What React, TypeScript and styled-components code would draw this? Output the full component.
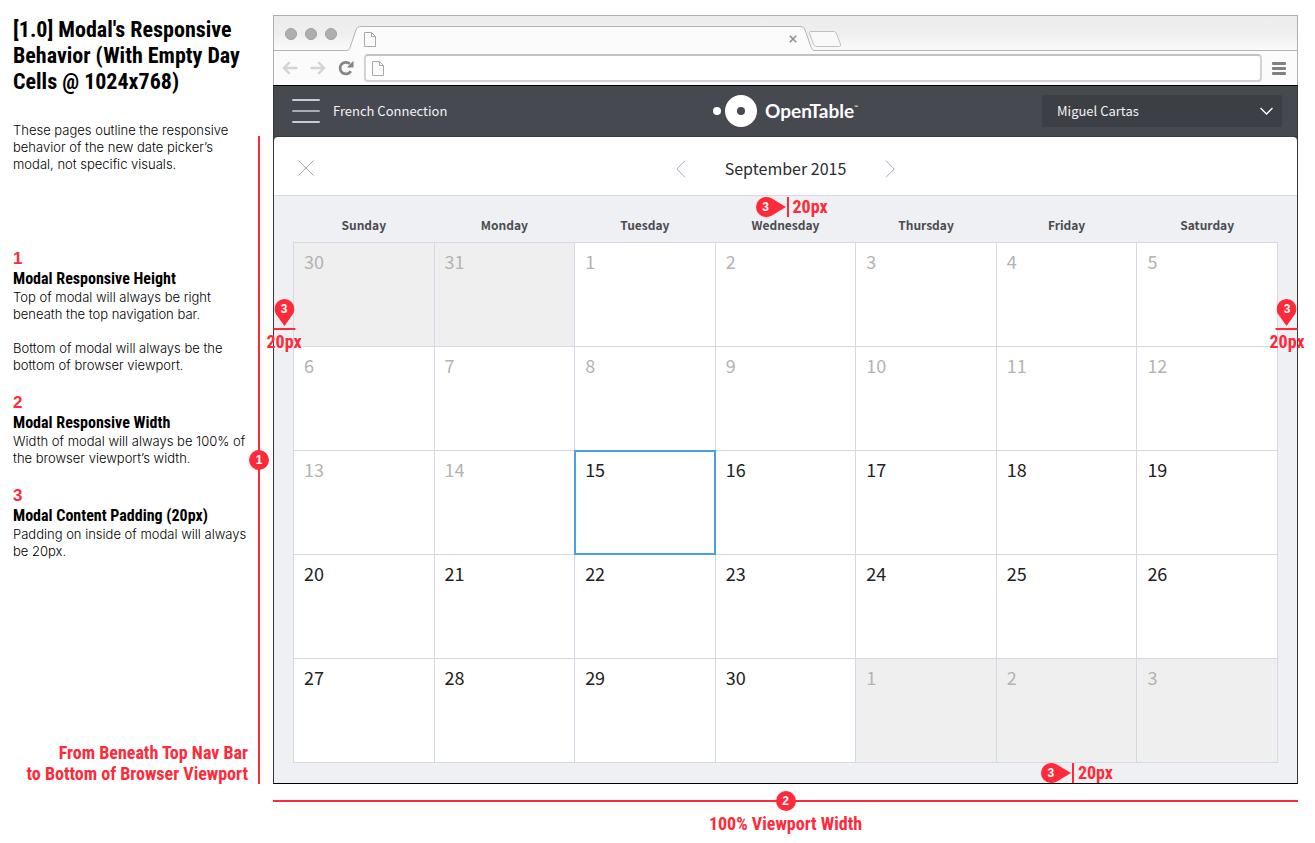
import React from "react";
import styled, { createGlobalStyle, css } from "styled-components";

const RED = "#ff2a39";
const LINE = "#d6d8e6";
const UI = `"Noto Sans CJK JP", "Noto Sans", sans-serif`;
const NARROW = `"Roboto Condensed", "Open Sans Condensed", "Liberation Sans", sans-serif`;

const Global = createGlobalStyle`
  *, *::before, *::after { box-sizing: border-box; }
  body { margin: 0; background: #fff; color: #000; font-family: "Liberation Sans", sans-serif; }
  h1, h2, h3, p { margin: 0; }
  button { margin: 0; padding: 0; border: 0; background: none; font: inherit; color: inherit; cursor: pointer; }
  svg { display: block; }
`;

const Page = styled.div`
  display: grid;
  grid-template-columns: 260px minmax(0, 1fr);
  column-gap: 13px;
  padding: 15px 17px 10px 0;
`;

/* ---- notes ---- */

const Aside = styled.aside`
  display: grid;
  grid-template-columns: minmax(0, 1fr) 2px;
`;

const Notes = styled.div`
  display: flex;
  flex-direction: column;
  padding: 2px 10px 0 13px;
  white-space: nowrap;
`;

const Title = styled.h1`
  font: bold 22px/26px ${NARROW};
`;

const Copy = styled.p`
  font-family: Inter, "Liberation Sans", sans-serif;
  font-weight: 300;
  font-size: 13px;
  line-height: 17px;
`;

const Intro = styled(Copy)`
  margin-top: 27px;
`;

const Sections = styled.div`
  display: grid;
  gap: 19px;
  margin-top: 76px;
`;

const SectionNumber = styled.div`
  color: ${RED};
  font-weight: bold;
  font-size: 17px;
  line-height: 20px;
`;

const SectionTitle = styled.h2`
  font: bold 16px/20px ${NARROW};
`;

const Label = styled.div`
  color: ${RED};
  font: bold 18px/21px ${NARROW};
`;

const HeightLabel = styled(Label)`
  margin-top: auto;
  text-align: right;
`;

const HeightRail = styled.div`
  position: relative;
  margin-top: 121px;
  background: ${RED};
`;

const Badge = styled.span`
  position: absolute;
  top: 50%;
  left: 50%;
  transform: translate(-50%, -50%);
  width: 20px;
  height: 20px;
  border-radius: 50%;
  background: ${RED};
  color: #fff;
  font-weight: bold;
  font-size: 12px;
  line-height: 20px;
  text-align: center;
`;

const WidthMeasure = styled.div`
  grid-column: 2;
  margin-top: 16px;
  text-align: center;
`;

const WidthRail = styled.div`
  position: relative;
  height: 2px;
  margin-bottom: 11px;
  background: ${RED};
`;

/* ---- browser ---- */

const Chrome = styled.div`
  border: 1px solid #b0b0b0;
  border-bottom: 0;
`;

const TabStrip = styled.div`
  display: flex;
  align-items: flex-end;
  height: 35px;
  padding-left: 11px;
  background: linear-gradient(#ececec 0%, #efefef 50%, #fbfbfb 100%);
  box-shadow: inset 0 -1px #b3b3b3;
`;

const Lights = styled.div`
  display: flex;
  gap: 8px;
  align-self: center;
  margin-right: 9px;
`;

const Light = styled.span`
  width: 12px;
  height: 12px;
  border: 1px solid #a0a0a2;
  border-radius: 50%;
  background: #aeaeb0;
`;

const TabBody = styled.div`
  display: flex;
  align-items: center;
  justify-content: space-between;
  flex: 0 1 439px;
  height: 25px;
  padding: 0 3px;
  border-top: 1px solid #b3b3b3;
  background: #fbfbfb;
`;

const Toolbar = styled.div`
  display: flex;
  align-items: center;
  height: 34px;
  padding: 0 11px 0 8px;
  background: #fbfbfb;
`;

const Tools = styled.div`
  display: flex;
  gap: 12px;
  margin-right: 10px;
`;

const Address = styled.label`
  display: flex;
  align-items: center;
  flex: 1;
  height: 28px;
  margin-right: 10px;
  padding-left: 6px;
  border: 2px solid #d2d2d2;
  border-top-color: #c2c2c2;
  border-radius: 4px;
  background: #fff;
`;

const AddressInput = styled.input`
  flex: 1;
  min-width: 0;
  margin-left: 8px;
  border: 0;
  outline: 0;
  background: none;
  font: 14px ${UI};
`;

const Viewport = styled.div`
  border: 1px solid #000;
  border-left-color: #35373b;
  border-right-color: #35373b;
  background: #464950;
  font-family: ${UI};
`;

const NavBar = styled.header`
  display: grid;
  grid-template-columns: 1fr auto 1fr;
  align-items: center;
  height: 51px;
  padding: 0 15px;
  border-bottom: 1px solid #3a3a42;
  color: #f3f3f3;
  font-size: 13px;
  line-height: 20px;
`;

const Place = styled.div`
  display: flex;
  align-items: center;
  gap: 13px;
  padding-left: 3px;
`;

const Brand = styled.div`
  display: flex;
  align-items: center;
  gap: 8px;
  color: #fff;
`;

const BrandName = styled.span`
  display: flex;
  font: 700 19px/22px Lato, sans-serif;
`;

const Trademark = styled.span`
  font-size: 5px;
  line-height: 14px;
`;

const Account = styled.div`
  position: relative;
  justify-self: end;
  width: 240px;
`;

const AccountSelect = styled.select`
  appearance: none;
  display: block;
  width: 100%;
  height: 32px;
  padding: 0 32px 0 15px;
  border: 0;
  border-radius: 0;
  background: #3c3f43;
  color: #f3f3f3;
  font: 13px/20px ${UI};
`;

const Caret = styled.svg`
  position: absolute;
  top: 12px;
  right: 9px;
  pointer-events: none;
`;

const ModalHead = styled.div`
  display: grid;
  grid-template-columns: 1fr auto 1fr;
  align-items: center;
  height: 59px;
  padding: 5px 24px 0;
  border-bottom: 1px solid ${LINE};
  border-radius: 4px 4px 0 0;
  background: #fff;
`;

const MonthNav = styled.div`
  display: flex;
  align-items: center;
  gap: 39px;
`;

const Month = styled.h2`
  padding-bottom: 2px;
  color: #2b2c2f;
  font-weight: 400;
  font-size: 16px;
  line-height: 24px;
`;

const ModalBody = styled.div`
  position: relative;
  padding: 20px 19px;
  background: #eff0f4;
`;

const Calendar = styled.table`
  width: 100%;
  table-layout: fixed;
  border-collapse: collapse;
`;

const Weekday = styled.th`
  height: 26px;
  padding: 0 0 8px;
  color: #4b4c50;
  font-weight: 700;
  font-size: 12px;
  line-height: 18px;
`;

type Kind = "outside" | "past" | "today" | "open";

const Cell = styled.td<{ $kind: Kind }>`
  padding: 0;
  border: 1px solid ${LINE};
  background: ${(p) => (p.$kind === "outside" ? "#efefef" : "#fff")};
`;

const Day = styled.button<{ $kind: Kind }>`
  display: block;
  width: 100%;
  height: 103px;
  padding: 6px 10px 73px;
  color: ${(p) => (p.$kind === "outside" || p.$kind === "past" ? "#b3b3b3" : "#222")};
  font-size: 18px;
  line-height: 24px;
  text-align: left;
  ${(p) =>
    p.$kind === "today" &&
    css`
      position: relative;
      outline: 2px solid #4a9fe4;
      outline-offset: -1px;
    `}
`;

/* ---- padding callouts ---- */

const Callout = styled.div<{ $vertical?: boolean }>`
  position: absolute;
  z-index: 2;
  display: flex;
  flex-direction: ${(p) => (p.$vertical ? "column" : "row")};
  align-items: center;
`;

const TopCallout = styled(Callout)`
  top: 0;
  left: calc(50% - 30px);
`;

const BottomCallout = styled(Callout)`
  bottom: 0;
  right: 184px;
`;

const LeftCallout = styled(Callout)`
  top: 103px;
  left: 10px;
  transform: translateX(-50%);
`;

const RightCallout = styled(Callout)`
  top: 103px;
  right: 10px;
  transform: translateX(50%);
`;

const Tick = styled.span<{ $vertical?: boolean }>`
  width: ${(p) => (p.$vertical ? 22 : 2)}px;
  height: ${(p) => (p.$vertical ? 2 : 20)}px;
  margin: ${(p) => (p.$vertical ? "2px 0 1px" : "0 4px 0 1px")};
  background: ${RED};
`;

const PinBox = styled.span`
  position: relative;
  display: block;
`;

const PinNumber = styled.span`
  position: absolute;
  top: 0;
  left: 0;
  width: 20px;
  color: #fff;
  font: bold 12px/20px "Liberation Sans", sans-serif;
  text-align: center;
`;

function Pin({ vertical }: { vertical?: boolean }) {
  return (
    <PinBox>
      {vertical ? (
        <svg width="20" height="27" viewBox="0 0 20 27">
          <path d="M10 0a10 10 0 0 1 10 10c0 4-3 7-5 10l-5 7-5-7c-2-3-5-6-5-10A10 10 0 0 1 10 0z" fill={RED} />
        </svg>
      ) : (
        <svg width="30" height="20" viewBox="0 0 30 20">
          <path d="M0 10A10 10 0 0 1 10 0c4 0 7 2 10 4l10 6-10 6c-3 2-6 4-10 4A10 10 0 0 1 0 10z" fill={RED} />
        </svg>
      )}
      <PinNumber>3</PinNumber>
    </PinBox>
  );
}

function CalloutContent({ vertical }: { vertical?: boolean }) {
  return (
    <>
      <Pin vertical={vertical} />
      <Tick $vertical={vertical} />
      <Label>20px</Label>
    </>
  );
}

function PageIcon() {
  return (
    <svg width="12" height="15" viewBox="0 0 12 15" fill="#fbfbfb" stroke="#a9a9a9">
      <path d="M.5.5h7l4 4v10H.5z" />
      <path d="M7.5.5v4h4" fill="none" />
    </svg>
  );
}

function Arrow({ back }: { back?: boolean }) {
  return (
    <svg width="16" height="14" viewBox="0 0 16 14" fill="none" stroke="#d4d4d4" strokeWidth="2.4" strokeLinecap="round" strokeLinejoin="round">
      <path d={back ? "M14.5 7H2M7 1.8 1.8 7 7 12.2" : "M1.5 7H14M9 1.8 14.2 7 9 12.2"} />
    </svg>
  );
}

const weekdays = ["Sunday", "Monday", "Tuesday", "Wednesday", "Thursday", "Friday", "Saturday"];

const days = Array.from({ length: 35 }, (_, i) => {
  const n = i - 1;
  const outside = n < 1 || n > 30;
  const kind: Kind = outside ? "outside" : n < 15 ? "past" : n === 15 ? "today" : "open";
  return { date: n < 1 ? n + 31 : n > 30 ? n - 30 : n, kind };
});

const weeks = [0, 1, 2, 3, 4].map((w) => days.slice(w * 7, w * 7 + 7));

export default function App() {
  return (
    <>
      <Global />
      <Page>
        <Aside>
          <Notes>
            <Title>
              [1.0] Modal's Responsive
              <br />
              Behavior (With Empty Day
              <br />
              Cells @ 1024x768)
            </Title>
            <Intro>
              These pages outline the responsive
              <br />
              behavior of the new date picker’s
              <br />
              modal, not specific visuals.
            </Intro>
            <Sections>
              <section>
                <SectionNumber>1</SectionNumber>
                <SectionTitle>Modal Responsive Height</SectionTitle>
                <Copy>
                  Top of modal will always be right
                  <br />
                  beneath the top navigation bar.
                  <br />
                  <br />
                  Bottom of modal will always be the
                  <br />
                  bottom of browser viewport.
                </Copy>
              </section>
              <section>
                <SectionNumber>2</SectionNumber>
                <SectionTitle>Modal Responsive Width</SectionTitle>
                <Copy>
                  Width of modal will always be 100% of
                  <br />
                  the browser viewport’s width.
                </Copy>
              </section>
              <section>
                <SectionNumber>3</SectionNumber>
                <SectionTitle>Modal Content Padding (20px)</SectionTitle>
                <Copy>
                  Padding on inside of modal will always
                  <br />
                  be 20px.
                </Copy>
              </section>
            </Sections>
            <HeightLabel>
              From Beneath Top Nav Bar
              <br />
              to Bottom of Browser Viewport
            </HeightLabel>
          </Notes>
          <HeightRail>
            <Badge>1</Badge>
          </HeightRail>
        </Aside>

        <main>
          <Chrome>
            <TabStrip>
              <Lights>
                <Light />
                <Light />
                <Light />
              </Lights>
              <svg width="15" height="25" viewBox="0 0 15 25">
                <path d="M0 24.5C3 24.5 3.5 23 4.2 21L10 4C11 1.5 12 .5 15 .5V25H0z" fill="#fbfbfb" />
                <path d="M0 24.5C3 24.5 3.5 23 4.2 21L10 4C11 1.5 12 .5 15 .5" fill="none" stroke="#b3b3b3" />
              </svg>
              <TabBody>
                <PageIcon />
                <button aria-label="Close tab">
                  <svg width="8" height="8" viewBox="0 0 8 8" stroke="#8f8f8f" strokeWidth="1.6">
                    <path d="M.8.8l6.400 6.400M7.200.8.8 7.200" />
                  </svg>
                </button>
              </TabBody>
              <svg width="44" height="25" viewBox="0 0 44 25">
                <path d="M0 .5C3 .5 4 1.5 5 4l6 17c.8 2 1.5 3.5 4 3.5V25H0z" fill="#fbfbfb" />
                <path d="M0 .5C3 .5 4 1.5 5 4l6 17c.8 2 1.5 3.5 4 3.5" fill="none" stroke="#b3b3b3" />
                <path d="M11 5.5H33c2 0 3 .8 3.6 2.5l3.8 10c.6 1.6 0 2.5-1.800 2.5H17c-2 0-2.800-.8-3.500-2.500L9.800 8C9.200 6.300 9.500 5.500 11 5.500z" fill="#f9f9f9" stroke="#c0c0c0" />
              </svg>
            </TabStrip>
            <Toolbar>
              <Tools>
                <button aria-label="Back">
                  <Arrow back />
                </button>
                <button aria-label="Forward">
                  <Arrow />
                </button>
                <button aria-label="Reload">
                  <svg width="16" height="16" viewBox="0 0 16 16">
                    <path d="M12.8 11.2A5.800 5.800 0 1 1 11.800 3.800" fill="none" stroke="#858585" strokeWidth="2.8" />
                    <path d="M15.500.8V7.500H8.800z" fill="#858585" />
                  </svg>
                </button>
              </Tools>
              <Address>
                <PageIcon />
                <AddressInput type="text" aria-label="Address" />
              </Address>
              <button aria-label="Browser menu">
                <svg width="14" height="13" viewBox="0 0 14 13" fill="#808080">
                  <rect width="14" height="3" rx="1" />
                  <rect y="5" width="14" height="3" rx="1" />
                  <rect y="10" width="14" height="3" rx="1" />
                </svg>
              </button>
            </Toolbar>
          </Chrome>

          <Viewport>
            <NavBar>
              <Place>
                <button aria-label="Menu">
                  <svg width="28" height="24" viewBox="0 0 28 24" fill="#c9cccf">
                    <rect width="28" height="2" rx="1" />
                    <rect y="11" width="28" height="2" rx="1" fill="#a9abae" />
                    <rect y="22" width="28" height="2" rx="1" />
                  </svg>
                </button>
                French Connection
              </Place>
              <Brand>
                <svg width="44" height="32" viewBox="0 0 44 32" fill="#fff">
                  <circle cx="4" cy="16" r="4" />
                  <path fillRule="evenodd" d="M28 0a16 16 0 1 1 0 32 16 16 0 0 1 0-32zm0 12a4 4 0 1 0 0 8 4 4 0 0 0 0-8z" />
                </svg>
                <BrandName>
                  OpenTable<Trademark>™</Trademark>
                </BrandName>
              </Brand>
              <Account>
                <AccountSelect aria-label="Account" defaultValue="Miguel Cartas">
                  <option>Miguel Cartas</option>
                </AccountSelect>
                <Caret width="13" height="8" viewBox="0 0 13 8" fill="none" stroke="#fff" strokeWidth="1.3">
                  <path d="M.5 1l6 6 6-6" />
                </Caret>
              </Account>
            </NavBar>

            <ModalHead>
              <div>
                <button aria-label="Close">
                  <svg width="16" height="16" viewBox="0 0 16 16" stroke="#a3a3a8">
                    <path d="M.5.5l15 15M15.5.5l-15 15" />
                  </svg>
                </button>
              </div>
              <MonthNav>
                <button aria-label="Previous month">
                  <svg width="10" height="18" viewBox="0 0 10 18" fill="none" stroke="#a9aabb">
                    <path d="M9 .7.8 9 9 17.300" />
                  </svg>
                </button>
                <Month>September 2015</Month>
                <button aria-label="Next month">
                  <svg width="10" height="18" viewBox="0 0 10 18" fill="none" stroke="#a9aabb">
                    <path d="M1 .7 9.200 9 1 17.300" />
                  </svg>
                </button>
              </MonthNav>
            </ModalHead>

            <ModalBody>
              <Calendar>
                <thead>
                  <tr>
                    {weekdays.map((d) => (
                      <Weekday key={d} scope="col">
                        {d}
                      </Weekday>
                    ))}
                  </tr>
                </thead>
                <tbody>
                  {weeks.map((week, w) => (
                    <tr key={w}>
                      {week.map(({ date, kind }) => (
                        <Cell key={date} $kind={kind}>
                          <Day $kind={kind}>{date}</Day>
                        </Cell>
                      ))}
                    </tr>
                  ))}
                </tbody>
              </Calendar>
              <TopCallout>
                <CalloutContent />
              </TopCallout>
              <BottomCallout>
                <CalloutContent />
              </BottomCallout>
              <LeftCallout $vertical>
                <CalloutContent vertical />
              </LeftCallout>
              <RightCallout $vertical>
                <CalloutContent vertical />
              </RightCallout>
            </ModalBody>
          </Viewport>
        </main>

        <WidthMeasure>
          <WidthRail>
            <Badge>2</Badge>
          </WidthRail>
          <Label>100% Viewport Width</Label>
        </WidthMeasure>
      </Page>
    </>
  );
}
